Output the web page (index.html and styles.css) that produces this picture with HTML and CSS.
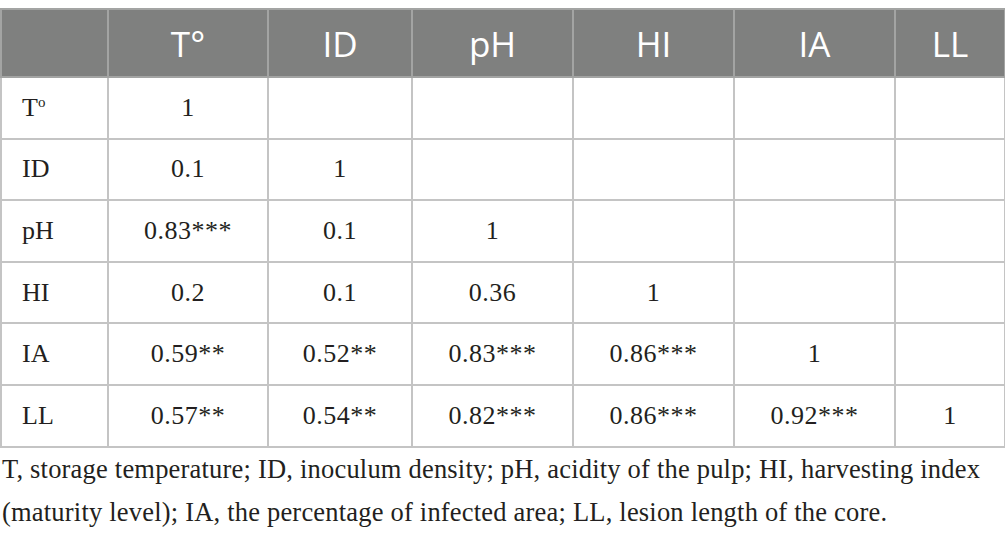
FILE: index.html
```html
<!DOCTYPE html>
<html lang="en">
<head>
<meta charset="UTF-8">
<title>Correlation matrix</title>
<link rel="stylesheet" href="styles.css">
</head>
<body>

<div class="wrap">
<table class="table">
<colgroup>
<col class="c-lab"><col class="c-t"><col class="c-id"><col class="c-ph"><col class="c-hi"><col class="c-ia"><col class="c-ll">
</colgroup>
<thead>
<tr><th></th><th>T°</th><th>ID</th><th>pH</th><th>HI</th><th>IA</th><th>LL</th></tr>
</thead>
<tbody>
<tr><td class="label">T<sup>o</sup></td><td>1</td><td></td><td></td><td></td><td></td><td></td></tr>
<tr><td class="label">ID</td><td>0.1</td><td>1</td><td></td><td></td><td></td><td></td></tr>
<tr><td class="label">pH</td><td>0.83***</td><td>0.1</td><td>1</td><td></td><td></td><td></td></tr>
<tr><td class="label">HI</td><td>0.2</td><td>0.1</td><td>0.36</td><td>1</td><td></td><td></td></tr>
<tr><td class="label">IA</td><td>0.59**</td><td>0.52**</td><td>0.83***</td><td>0.86***</td><td>1</td><td></td></tr>
<tr><td class="label">LL</td><td>0.57**</td><td>0.54**</td><td>0.82***</td><td>0.86***</td><td>0.92***</td><td>1</td></tr>
</tbody>
</table>

<p class="note">T, storage temperature; ID, inoculum density; pH, acidity of the pulp; HI, harvesting index (maturity level); IA, the percentage of infected area; LL, lesion length of the core.</p>
</div>

</body>
</html>
```

FILE: styles.css
```css
body {
    margin: 0;
    background: #fff;
    color: #231f20;
    font-family: "Liberation Serif", "DejaVu Serif", serif;
}
.wrap { padding-top: 8px; }
.table {
    width: 1004px;
    border-collapse: collapse;
    table-layout: fixed;
}
.c-lab { width: 107px; }
.c-t { width: 160px; }
.c-id { width: 144px; }
.c-ph { width: 161px; }
.c-hi { width: 161px; }
.c-ia { width: 161px; }
.c-ll { width: 110px; }
.table th {
    height: 66px;
    padding: 0;
    background-color: #7f807f;
    color: #fff;
    border: 2px solid #a3a4a3;
    font-family: "Open Sans", "Noto Sans", sans-serif;
    font-weight: 400;
    font-size: 35px;
    text-align: center;
}
.table td {
    height: 59.6px;
    padding: 0;
    border: 2px solid #c4c4c4;
    font-size: 26px;
    letter-spacing: 0.5px;
    text-align: center;
}
.table td.label {
    text-align: left;
    padding-left: 20px;
    letter-spacing: 0;
}
sup { font-size: 15px; vertical-align: 9px; }
.note {
    margin: 0;
    padding: 0 15px 0 2px;
    font-size: 26.5px;
    letter-spacing: 0.2px;
    line-height: 43px;
}
```
